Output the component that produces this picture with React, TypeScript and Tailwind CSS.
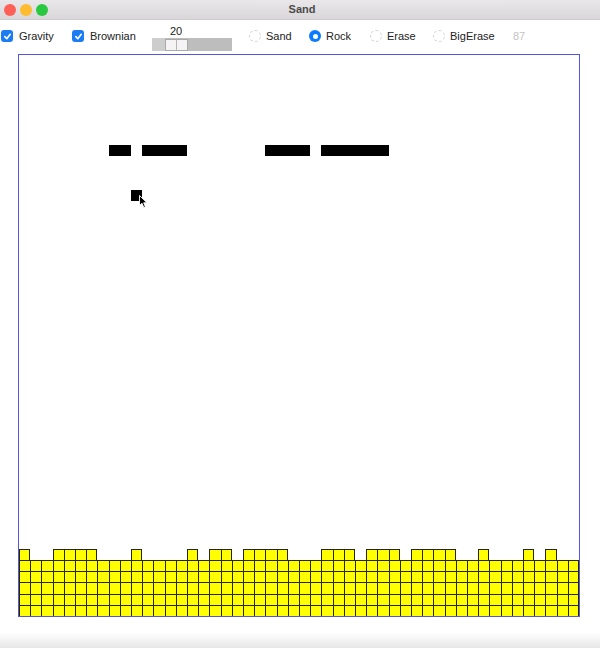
import React from "react";

const N = 50;

// top row of the sand pile (row 44); rows 45-49 are full
const sandTop = [0, 3, 4, 5, 6, 10, 15, 17, 18, 20, 21, 22, 23, 27, 28, 29, 31, 32, 33, 35, 36, 37, 38, 41, 45, 47];

const rocks: [number, number][] = [
  [8, 8], [8, 9],
  [8, 11], [8, 12], [8, 13], [8, 14],
  [8, 22], [8, 23], [8, 24], [8, 25],
  [8, 27], [8, 28], [8, 29], [8, 30], [8, 31], [8, 32],
  [12, 10],
];

function cellType(r: number, c: number) {
  if (r >= 45) return "sand";
  if (r === 44 && sandTop.includes(c)) return "sand";
  if (rocks.some(([rr, cc]) => rr === r && cc === c)) return "rock";
  return "empty";
}

function Checkbox({ label }: { label: string }) {
  return (
    <div className="flex items-center gap-[6px]">
      <div className="w-[12px] h-[12px] rounded-[3px] bg-[#1b7cf4] flex items-center justify-center">
        <svg width="9" height="9" viewBox="0 0 10 10">
          <path d="M2 5.2 L4.2 7.4 L8 2.6" fill="none" stroke="white" strokeWidth="1.8" strokeLinecap="round" strokeLinejoin="round" />
        </svg>
      </div>
      <span className="text-[11px] text-[#222]">{label}</span>
    </div>
  );
}

function Radio({ label, on, w }: { label: string; on?: boolean; w: string }) {
  return (
    <div className={`flex items-center gap-[5px] ${w}`}>
      {on ? (
        <div className="w-[12px] h-[12px] rounded-full bg-[#0a7aff] flex items-center justify-center">
          <div className="w-[5px] h-[5px] rounded-full bg-white" />
        </div>
      ) : (
        <div className="w-[12px] h-[12px] rounded-full border border-dashed border-[#d4d4d4] bg-white" />
      )}
      <span className="text-[11px] text-[#222]">{label}</span>
    </div>
  );
}

export default function App() {
  const cells = [];
  for (let r = 0; r < N; r++) {
    for (let c = 0; c < N; c++) {
      const t = cellType(r, c);
      if (t === "sand") {
        const right = c === N - 1 || cellType(r, c + 1) !== "sand";
        cells.push(
          <div
            key={r * N + c}
            className={`bg-[#ffff00] border-[#26260c] border-l border-t ${right ? "border-r" : ""}`}
          />
        );
      } else if (t === "rock") {
        cells.push(<div key={r * N + c} className="bg-black" />);
      } else {
        cells.push(<div key={r * N + c} />);
      }
    }
  }

  return (
    <div className="w-[600px] h-[648px] bg-white flex flex-col overflow-hidden" style={{ fontFamily: '"Liberation Sans", Arial, sans-serif' }}>
      {/* title bar */}
      <div className="relative h-[20px] bg-gradient-to-b from-[#e9e7e9] to-[#d9d7d9] border-b border-[#cdcdcd] flex items-center justify-center">
        <div className="absolute left-[4px] top-[4px] flex gap-[4px]">
          <div className="w-[12px] h-[12px] rounded-full bg-[#fe5f57]" />
          <div className="w-[12px] h-[12px] rounded-full bg-[#febc2e]" />
          <div className="w-[12px] h-[12px] rounded-full bg-[#28c840]" />
        </div>
        <span className="text-[11px] font-bold text-[#4b4b4b] ml-[4px]">Sand</span>
      </div>

      {/* toolbar */}
      <div className="h-[34px] flex items-center pl-[1px] pb-[2px]">
        <div className="w-[71px]"><Checkbox label="Gravity" /></div>
        <div className="w-[80px]"><Checkbox label="Brownian" /></div>
        <div className="w-[97px] flex flex-col items-start mt-[4px]">
          <span className="w-[48px] text-center text-[11px] text-[#222] leading-[13px]">20</span>
          <div className="w-[80px] h-[13px] bg-[#bdbdbd] flex items-center">
            <div className="w-[13px] h-full bg-[#cdcdcd]" />
            <div className="w-[23px] h-[12px] bg-[#f4f4f4] border border-[#a9a9a9] flex">
              <div className="w-1/2 border-r border-[#b5b5b5]" />
            </div>
          </div>
        </div>
        <Radio label="Sand" w="w-[60px]" />
        <Radio label="Rock" on w="w-[61px]" />
        <Radio label="Erase" w="w-[63px]" />
        <Radio label="BigErase" w="w-[80px]" />
        <span className="text-[11px] text-[#c4c4c4]">87</span>
      </div>

      {/* canvas */}
      <div className="pl-[18px]">
        <div className="relative w-[562px] h-[563px] border border-[#5454e6] bg-white grid grid-cols-[repeat(50,1fr)] grid-rows-[repeat(50,1fr)]">
          {cells}
          <svg className="absolute left-[120px] top-[140px]" width="9" height="14" viewBox="0 0 9 14">
            <path d="M0.5 0.5 L0.5 10.5 L3 8.3 L4.8 12.5 L6.4 11.8 L4.7 7.8 L8 7.8 Z" fill="black" stroke="white" strokeWidth="0.9" strokeLinejoin="round" />
          </svg>
        </div>
      </div>

      {/* bottom */}
      <div className="flex-1 bg-gradient-to-b from-white via-white to-[#e6e6e6]" />
    </div>
  );
}
